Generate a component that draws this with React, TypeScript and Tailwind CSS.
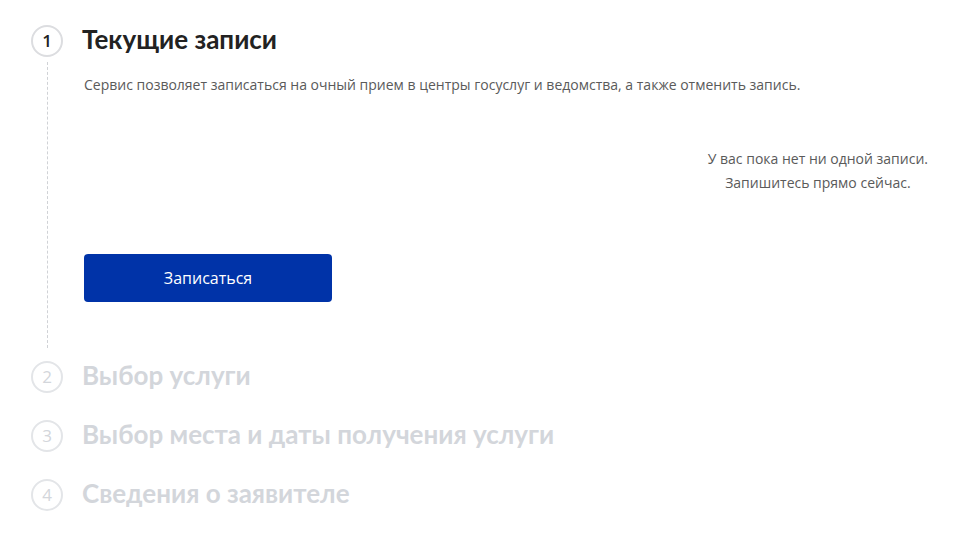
import React from 'react';

const steps = [
    { n: 2, title: 'Выбор услуги' },
    { n: 3, title: 'Выбор места и даты получения услуги' },
    { n: 4, title: 'Сведения о заявителе' },
];

const StepCircle: React.FC<{ n: number; active?: boolean }> = ({ n, active }) => (
    <div
        className={`w-8 h-8 shrink-0 rounded-full border-2 flex items-center justify-center text-[17px] ${
            active ? 'border-[#dcdde0] text-[#222] font-semibold' : 'border-[#e3e5e8] text-[#d3d6db]'
        }`}
    >
        {n}
    </div>
);

const App: React.FC = () => {
    return (
        <div className="w-[976px] h-[546px] bg-white px-[31px] pt-[25px] font-['Open_Sans',sans-serif] overflow-hidden">
            {/* Step 1 - active */}
            <div className="flex items-center gap-[19px]">
                <StepCircle n={1} active />
                <h2 className="-mt-1 font-['Lato',sans-serif] text-[26px] leading-8 font-bold text-[#222]">Текущие записи</h2>
            </div>

            <div className="flex h-[304px]">
                <div className="w-8 shrink-0 flex justify-center pt-[5px] pb-[13px]">
                    <div className="border-l border-dashed border-[#d0d2d6]" />
                </div>
                <div className="flex-1 pl-[21px] pt-[18px]">
                    <p className="text-[14px] leading-5 text-[#5a5a5a]">
                        Сервис позволяет записаться на очный прием в центры госуслуг и ведомства, а также отменить запись.
                    </p>
                    <div className="flex justify-end pr-[17px] mt-[52px]">
                        <div className="text-center text-[14px] leading-6 text-[#5a5a5a]">
                            <p>У вас пока нет ни одной записи.</p>
                            <p>Запишитесь прямо сейчас.</p>
                        </div>
                    </div>
                    <button className="mt-[59px] w-[248px] h-12 rounded bg-[#0033a8] text-white text-[16px]">
                        Записаться
                    </button>
                </div>
            </div>

            {/* Upcoming steps */}
            <div className="flex flex-col gap-[27px]">
                {steps.map((s) => (
                    <div key={s.n} className="flex items-center gap-[19px]">
                        <StepCircle n={s.n} />
                        <h2 className="-mt-1 font-['Lato',sans-serif] text-[26px] leading-8 font-bold text-[#d3d6db]">{s.title}</h2>
                    </div>
                ))}
            </div>
        </div>
    );
};

export default App;
